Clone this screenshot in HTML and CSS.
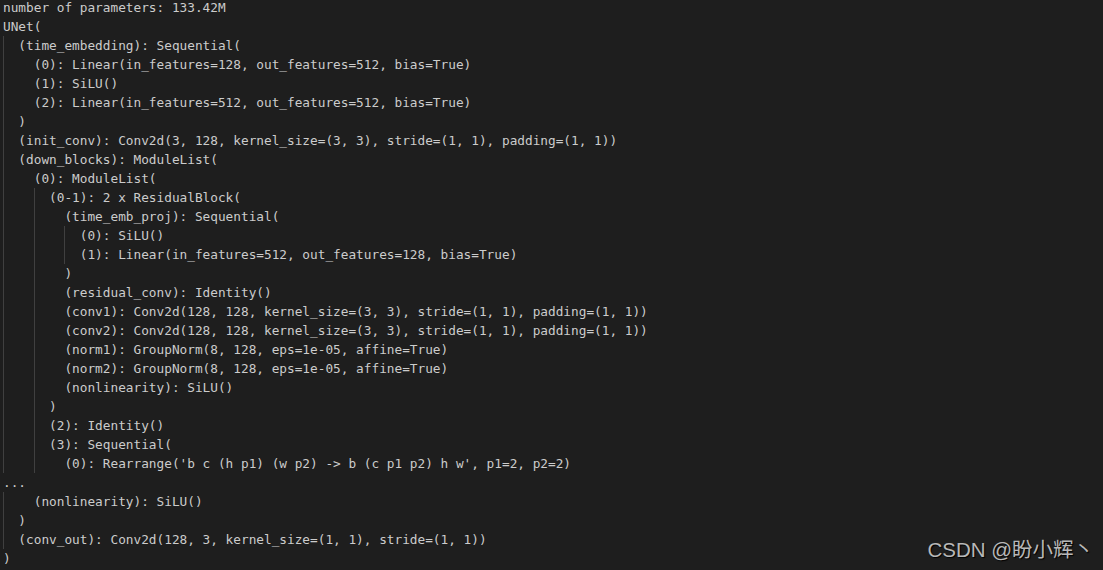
FILE: index.html
```html
<!DOCTYPE html>
<html lang="en">
<head>
<meta charset="utf-8">
<title>UNet summary</title>
<link rel="stylesheet" href="styles.css">
</head>
<body>
<main class="term">
<div class="ln">number of parameters: 133.42M</div>
<div class="ln">UNet(</div>
<div class="guide g0">
<div class="ln">  (time_embedding): Sequential(</div>
<div class="ln">    (0): Linear(in_features=128, out_features=512, bias=True)</div>
<div class="ln">    (1): SiLU()</div>
<div class="ln">    (2): Linear(in_features=512, out_features=512, bias=True)</div>
<div class="ln">  )</div>
<div class="ln">  (init_conv): Conv2d(3, 128, kernel_size=(3, 3), stride=(1, 1), padding=(1, 1))</div>
<div class="ln">  (down_blocks): ModuleList(</div>
<div class="ln">    (0): ModuleList(</div>
<div class="guide g4">
<div class="ln">      (0-1): 2 x ResidualBlock(</div>
<div class="ln">        (time_emb_proj): Sequential(</div>
<div class="guide g8">
<div class="ln">          (0): SiLU()</div>
<div class="ln">          (1): Linear(in_features=512, out_features=128, bias=True)</div>
</div>
<div class="ln">        )</div>
<div class="ln">        (residual_conv): Identity()</div>
<div class="ln">        (conv1): Conv2d(128, 128, kernel_size=(3, 3), stride=(1, 1), padding=(1, 1))</div>
<div class="ln">        (conv2): Conv2d(128, 128, kernel_size=(3, 3), stride=(1, 1), padding=(1, 1))</div>
<div class="ln">        (norm1): GroupNorm(8, 128, eps=1e-05, affine=True)</div>
<div class="ln">        (norm2): GroupNorm(8, 128, eps=1e-05, affine=True)</div>
<div class="ln">        (nonlinearity): SiLU()</div>
<div class="ln">      )</div>
<div class="ln">      (2): Identity()</div>
<div class="ln">      (3): Sequential(</div>
<div class="ln">        (0): Rearrange('b c (h p1) (w p2) -&gt; b (c p1 p2) h w', p1=2, p2=2)</div>
</div>
</div>
<div class="ln">...</div>
<div class="guide g0">
<div class="ln">    (nonlinearity): SiLU()</div>
<div class="ln">  )</div>
<div class="ln">  (conv_out): Conv2d(128, 3, kernel_size=(1, 1), stride=(1, 1))</div>
</div>
<div class="ln">)</div>
</main>
<div class="watermark">CSDN @盼小辉丶</div>
</body>
</html>
```

FILE: styles.css
```css
html, body {
  margin: 0;
  padding: 0;
  background: #1e1e1e;
  width: 1103px;
  height: 570px;
  overflow: hidden;
}

.term {
  padding-left: 3px;
  font-family: "DejaVu Sans Mono", "Liberation Mono", monospace;
  font-size: 12.75px;
  line-height: 19px;
  color: #cccccc;
  margin-top: -2px;
}

.ln {
  white-space: pre;
  height: 19px;
}

.guide {
  background-image: linear-gradient(#404040, #404040);
  background-repeat: no-repeat;
  background-size: 1px 100%;
}

.g0 { background-position: 0 0; }
.g4 { background-position: 4ch 0; }
.g8 { background-position: 8ch 0; }

.watermark {
  position: absolute;
  right: 9px;
  bottom: 8px;
  font-family: "Liberation Sans", "Noto Sans CJK SC", sans-serif;
  font-size: 20.5px;
  line-height: 24px;
  color: #b8b8b8;
  text-shadow: 1px 1px 1px #000000;
}
```
